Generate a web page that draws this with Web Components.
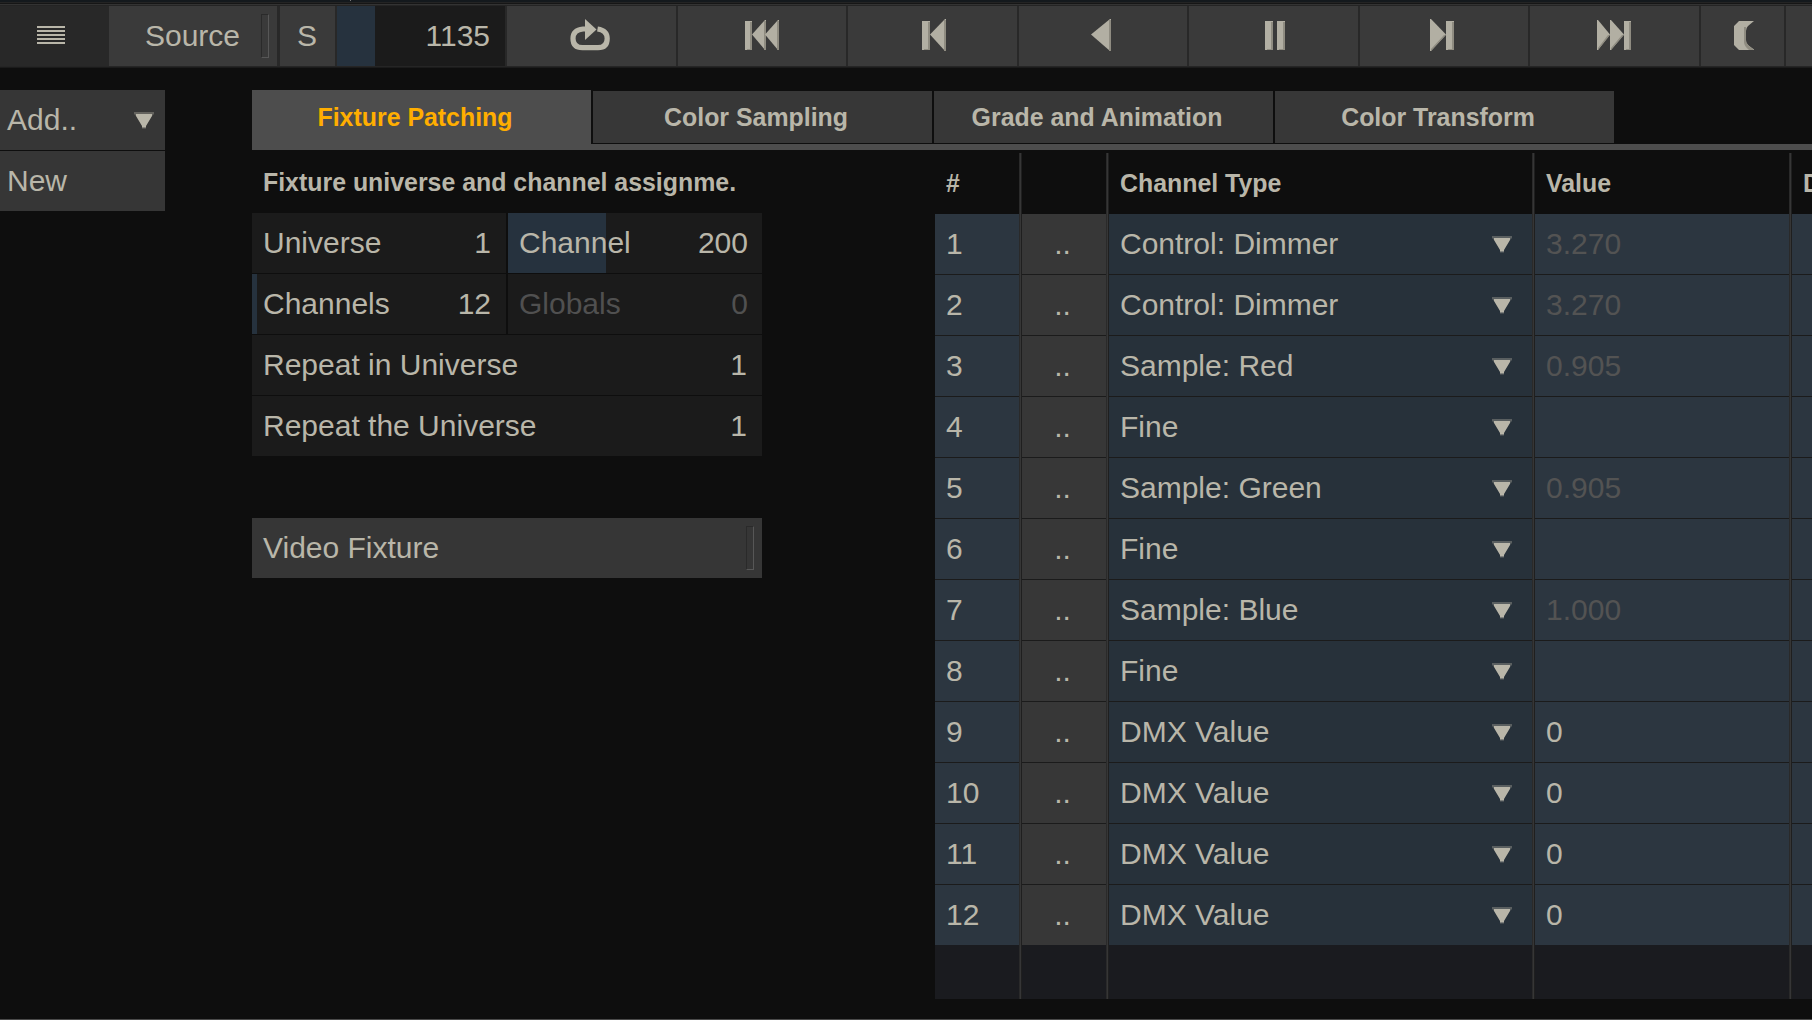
<!DOCTYPE html>
<html lang="en">
<head>
<meta charset="utf-8">
<title>Fixture Patching</title>
<style>
html,body{margin:0;height:100%;overflow:hidden;background:#0e0e0e}
body{font:30px/60px "Liberation Sans",Arial,sans-serif;color:#b9b6a9}
</style>
</head>
<body>
<fixture-app></fixture-app>
<script>
const define=(name,css,html)=>customElements.define(name,class extends HTMLElement{
  connectedCallback(){
    if(this.shadowRoot)return;
    const get=(k,d='')=>this.getAttribute(k)??d;
    this.attachShadow({mode:'open'}).innerHTML=`<style>:host{box-sizing:border-box}*{box-sizing:border-box}${css}</style>${typeof html==='function'?html(get,this):html}`;
  }
});

define('drop-arrow',':host{display:block;width:20px;height:16px;flex:none}svg{display:block;overflow:visible}',
 `<svg width="20" height="16"><path d="M0 0H20V2L18 4H2L0 2Z" fill="#b9b6a9" opacity=".35"/><path d="M2 2H18V4L12 14V15.500H8V14L2 4Z" fill="#b9b6a9"/><path d="M8 15h4v2H8z" fill="#b9b6a9" opacity=".2"/></svg>`);

define('push-notch',':host{display:block;width:8px;height:44px;border:1px solid #2a2a2a;border-right-color:#575757;border-bottom-color:#575757;flex:none}','');

const face='fill="#b2afa3"',shade='fill="#8f8c81"';
const bar=(x,w=8)=>`<path d="M${x} 21h${w}v29h-${w}z" ${face}/><path d="M${x+w-2} 22h2v28h-${w-2}v-1h${w-4}z" ${shade}/>`;
const left=(x,w,t=20,b=50)=>`<path d="M${x} 34.5L${x+w-1} ${t}h1V${b}h-1z" ${face}/><path d="M${x+w-2} ${t+1}h2V${b}h-2z" ${shade}/>`;
const right=(x,w,t=20,b=50)=>`<path d="M${x+w} 34.5L${x+1} ${t}h-1V${b}h1z" ${face}/><path d="M${x+w} 35L${x+1} ${b}v-2L${x+w-2} 35z" ${shade}/>`;
const icons={
 menu:'<path d="M37 26h28v2H37zM37 30h28v2H37zM37 34h28v2H37zM37 38h28v2H37zM37 42h28v2H37z" fill="#b9b6a9"/>',
 loop:'<path d="M80 29H76Q66 30 66 38.500Q66 47.700 75.500 47.700H91Q100.200 47.700 100.200 38.500Q100.200 30.500 90.500 29" fill="none" stroke="#b9b6a9" stroke-width="5.200"/><path d="M78 19L89.500 29.500L78 40z" fill="#b9b6a9"/>',
 first:bar(67,7)+left(74,14,20,50)+left(87,14,20,50),
 prev:bar(74)+left(82,16,19,51),
 back:left(72,20,19,51),
 pause:bar(76)+bar(88),
 next:right(70,16,19,51)+bar(86),
 last:right(67,13)+right(80,14)+bar(94,7),
 moon:'<path d="M53 21L47 26Q45 28 45 31V40Q45 43 47 45L53 49.500V50H38L33 45V26L38 21Z" fill="#b2afa3"/><path d="M43 27h2v15l3 4 5 4h-5q-5-4-5-8z" fill="#8f8c81"/>'
};
define('tool-button',':host{display:block;height:60px;background:#3a3a3a;flex:none}:host([flat]){background:none}svg{display:block;width:100%;height:66px;margin-top:-6px}',
 g=>`<svg>${icons[g('icon')]||''}</svg>`);

define('push-button',`:host{display:flex;height:60px;background:var(--bg,#363636);align-items:center;padding:0 var(--pr,8px) 0 var(--pl,11px);flex:none}
 span{flex:1;text-align:var(--align,left)}`,
 '<span><slot></slot></span><slot name="end"></slot>');

define('value-field',`:host{display:flex;height:60px;background:#1b1b1b;justify-content:space-between;padding:0 var(--pr,15px) 0 11px;flex:1}
 :host([disabled]){color:#505050}`,
 (g,el)=>{el.style.background=`linear-gradient(90deg,#26323e ${g('fill','0')}px,#1b1b1b 0)`;return `<span>${g('label')}</span><span>${g('value')}</span>`});

define('top-bar',`:host{display:block;height:68px;background:#282828;overflow:hidden}
 .strip{height:2px;background:linear-gradient(#777,#777) 350px 0/1px 1px no-repeat #14191d}
 .edge{height:4px;background:linear-gradient(#242424 1px,#161616 1px 2px,#333 2px 3px,#242424 3px)}
 .row{display:flex;height:60px;gap:2px}
 .foot{height:2px;background:linear-gradient(#252525 1px,#1b1b1b 0)}
 .menu{width:109px}.b{width:169px}.c{width:168px}
 .src{width:168px;margin:0 1px 0 -2px;--bg:#3a3a3a;--pl:15px;--pr:8px;--align:center}
 .s{width:55px;--bg:#3a3a3a;--pl:0;--pr:1px;--align:center}`,
 `<div class="strip"></div><div class="edge"></div><div class="row"><tool-button class="menu" flat icon="menu"></tool-button>
 <push-button class="src">Source<push-notch slot="end"></push-notch></push-button><push-button class="s">S</push-button>
 <value-field style="flex:0 0 168px" fill="38" label="" value="1135"></value-field>
 <tool-button class="b" icon="loop"></tool-button><tool-button class="c" icon="first"></tool-button><tool-button class="b" icon="prev"></tool-button>
 <tool-button class="c" icon="back"></tool-button><tool-button class="b" icon="pause"></tool-button><tool-button class="c" icon="next"></tool-button>
 <tool-button class="b" icon="last"></tool-button><tool-button style="width:83px" icon="moon"></tool-button><tool-button style="width:30px"></tool-button></div><div class="foot"></div>`);

define('tab-item',`:host{display:block;width:339px;height:52px;margin-top:1px;padding-right:13px;background:#373737;text-align:center;font:bold 24.9px/52px "Liberation Sans",Arial,sans-serif}
 :host([active]){height:54px;margin-top:0;background:#4d4d4d;color:#ffae00;line-height:54px}`,'<slot></slot>');
define('tab-strip',':host{display:flex;height:60px;gap:2px;border-bottom:6px solid #4d4d4d}','<slot></slot>');

define('patch-form',`:host{display:block;width:510px}
 h2{margin:0;height:63px;padding:2px 0 0 11px;font:bold 24.9px/60px "Liberation Sans",Arial,sans-serif;white-space:nowrap}
 .g{display:flex;flex-direction:column;gap:1px;margin-bottom:62px}.r{display:flex;gap:2px}.r value-field+value-field{--pr:14px}
 .pair value-field{flex:0 0 254px}`,
 `<h2>Fixture universe and channel assignme.</h2><div class="g">
 <div class="r pair"><value-field label="Universe" value="1"></value-field><value-field label="Channel" value="200" fill="98"></value-field></div>
 <div class="r pair"><value-field label="Channels" value="12" fill="5"></value-field><value-field disabled label="Globals" value="0"></value-field></div>
 <div class="r"><value-field label="Repeat in Universe" value="1"></value-field></div>
 <div class="r"><value-field label="Repeat the Universe" value="1"></value-field></div></div>
 <push-button>Video Fixture<push-notch slot="end"></push-notch></push-button>`);

define('table-column',`:host{display:flex;flex-direction:column;flex:none;padding-right:3px;background:linear-gradient(90deg,#2a2a2a 1px,#363636 1px 2px,#1f1f1f 2px) right/3px 100% no-repeat}
 .h{height:61px;padding-left:11px;font:bold 24.9px/60px "Liberation Sans",Arial,sans-serif;overflow:hidden;white-space:nowrap}
 .body{display:flex;flex-direction:column;gap:1px;background:#1b1b1b}
 .c{display:flex;align-items:center;justify-content:space-between;height:60px;background:var(--cell,#2c3640);padding:0 20px 0 11px}
 :host([center]) .c{justify-content:center;padding:0 3px 0 0}
 .dim{color:#535353}.rest{flex:1;background:#1a1b1f}`,
 g=>{const cells=g('cells').split('|');return `<div class="h">${g('head')}</div><div class="body">${cells.map(t=>`<div class="c"><span class="${/^\d\.\d/.test(t)?'dim':''}">${t}</span>${g('arrows')?'<drop-arrow></drop-arrow>':''}</div>`).join('')}</div><div class="rest"></div>`});

const nums=Array.from({length:12},(_,i)=>i+1).join('|');
define('channel-table',':host{display:flex;height:846px;width:877px;overflow:hidden}',
 `<table-column style="width:87px" head="#" cells="${nums}"></table-column>
 <table-column center style="width:87px;--cell:#373737" head="" cells="${Array(12).fill('..').join('|')}"></table-column>
 <table-column arrows="1" style="width:426px;--cell:#27313a" head="Channel Type" cells="Control: Dimmer|Control: Dimmer|Sample: Red|Fine|Sample: Green|Fine|Sample: Blue|Fine|DMX Value|DMX Value|DMX Value|DMX Value"></table-column>
 <table-column style="width:257px" head="Value" cells="3.270|3.270|0.905||0.905||1.000||0|0|0|0"></table-column>
 <table-column style="width:160px" head="D" cells="${'|'.repeat(11)}"></table-column>`);

define('fixture-app',`:host{display:flex;flex-direction:column;width:1812px;height:1020px;overflow:hidden;background:#0e0e0e;border-bottom:1px solid #4a4a4a}
 .main{display:flex;padding-top:22px;gap:87px}
 .side{width:165px;display:flex;flex-direction:column;gap:1px;--pl:7px;--pr:11px}
 .work{width:1560px}.cols{display:flex;gap:173px}channel-table{margin-top:3px}`,
 `<top-bar></top-bar><div class="main"><div class="side"><push-button>Add..<drop-arrow slot="end"></drop-arrow></push-button><push-button>New</push-button></div>
 <div class="work"><tab-strip><tab-item active>Fixture Patching</tab-item><tab-item>Color Sampling</tab-item><tab-item>Grade and Animation</tab-item><tab-item>Color Transform</tab-item></tab-strip>
 <div class="cols"><patch-form></patch-form><channel-table></channel-table></div></div></div>`);
</script>
</body>
</html>
